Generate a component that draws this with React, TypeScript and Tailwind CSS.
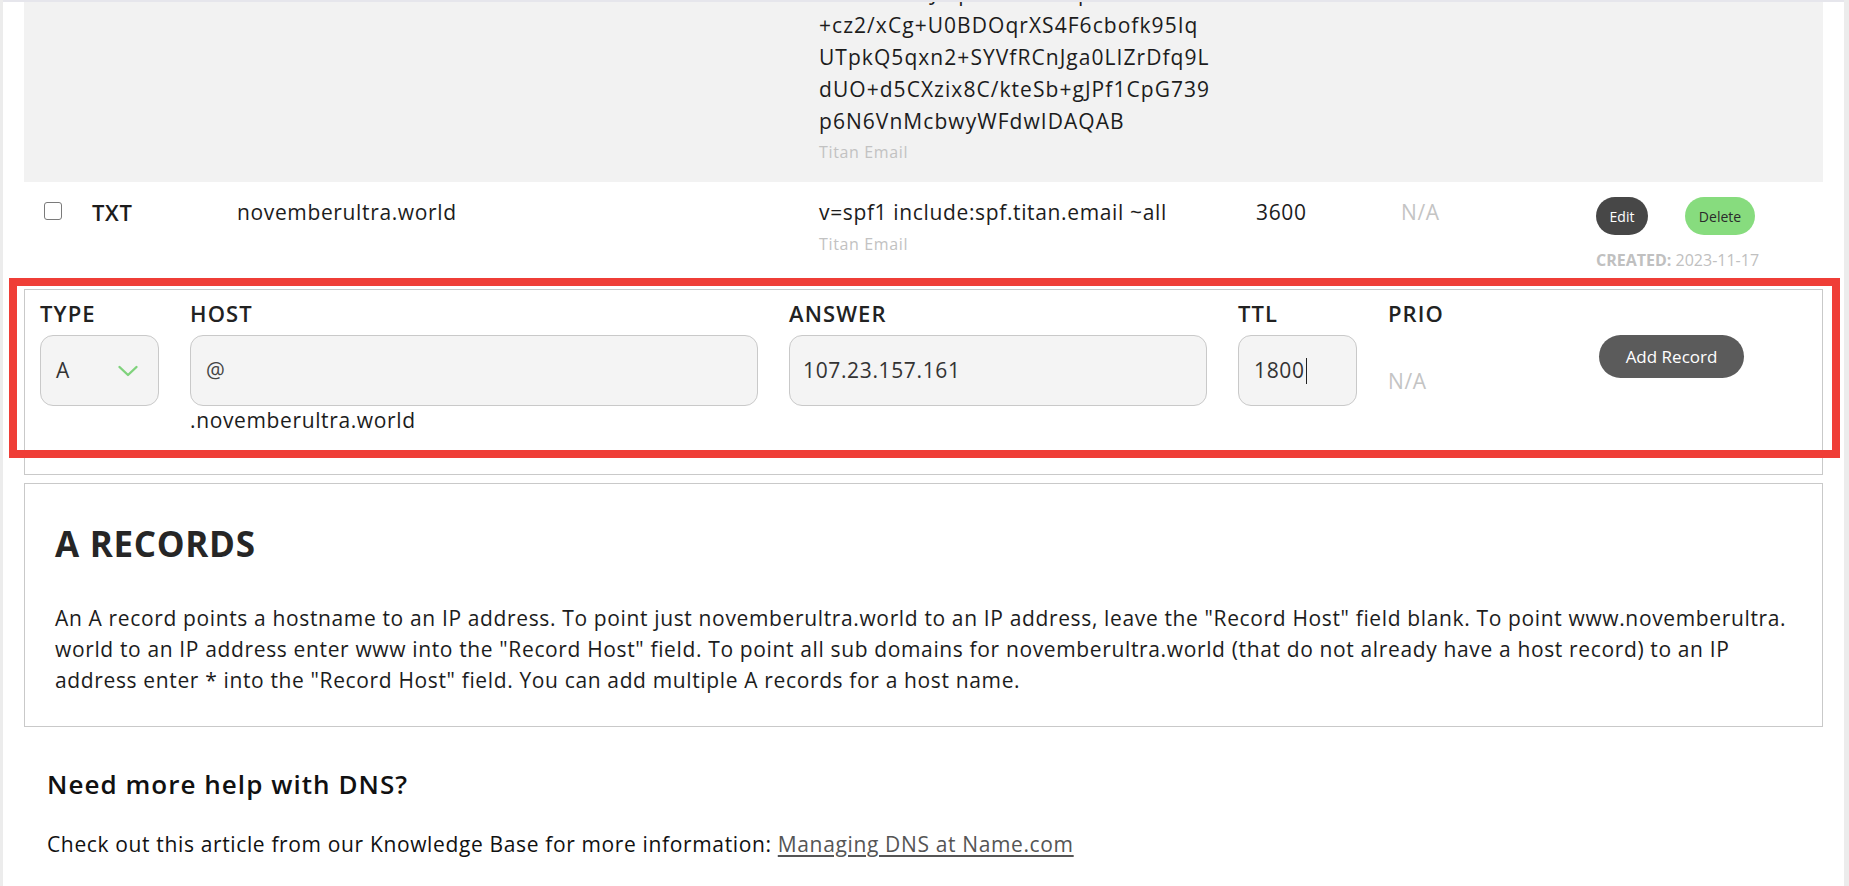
import React from "react";

const keyLines = [
  "hIMh7w6dJ2q0D1VvIchdpIhAnr+YvRr+o",
  "+cz2/xCg+U0BDOqrXS4F6cbofk95Iq",
  "UTpkQ5qxn2+SYVfRCnJga0LIZrDfq9L",
  "dUO+d5CXzix8C/kteSb+gJPf1CpG739",
  "p6N6VnMcbwyWFdwIDAQAB",
];

function Chevron() {
  return (
    <svg width="22" height="14" viewBox="0 0 22 14" fill="none">
      <path d="M2.5 3 L11 11 L19.5 3" stroke="#7fd27c" strokeWidth="2.4" strokeLinecap="round" strokeLinejoin="round" />
    </svg>
  );
}

function Label({ children }: { children: React.ReactNode }) {
  return <div className="text-[22px] leading-[28px] font-semibold tracking-[0.05em] text-[#222] mb-2">{children}</div>;
}

export default function App() {
  return (
    <div className="relative h-[886px] w-full overflow-hidden bg-white font-['Open_Sans','Liberation_Sans',sans-serif] tracking-[0.04em] text-[#1c1c1c]">
      {/* window frame edges */}
      <div className="absolute left-0 top-0 h-[2px] w-full bg-[#e6e6ec]" />
      <div className="absolute left-0 top-0 h-full w-[3px] bg-[#ececec]" />
      <div className="absolute right-0 top-0 h-full w-[5px] bg-[#ececec]" />

      <div className="ml-[24px] w-[1799px]">
        {/* DKIM record row (scrolled) */}
        <div className="h-[182px] overflow-hidden bg-[#f2f2f2]">
          <div className="mt-[-23px] grid grid-cols-[48px_145px_582px_437px_145px_195px_1fr] pl-[20px]">
            <div />
            <div />
            <div />
            <div>
              {keyLines.map((l) => (
                <div key={l} className="text-[21px] leading-[32px] tracking-[0.05em] whitespace-nowrap">{l}</div>
              ))}
              <div className="text-[16px] leading-[24px] text-[#c2c2c2] mt-[3px]">Titan Email</div>
            </div>
          </div>
        </div>

        {/* TXT record row */}
        <div className="h-[107px] grid grid-cols-[48px_145px_582px_437px_145px_195px_1fr] pl-[20px] pt-[16px]">
          <div className="pt-[4px]">
            <div className="h-[18px] w-[18px] rounded-[3px] border-[1.5px] border-[#7a7a7a] bg-white" />
          </div>
          <div className="text-[22px] leading-[28px] font-semibold">TXT</div>
          <div className="text-[21px] leading-[28px]">novemberultra.world</div>
          <div>
            <div className="text-[21px] leading-[28px] whitespace-nowrap">v=spf1 include:spf.titan.email ~all</div>
            <div className="text-[16px] leading-[24px] text-[#c2c2c2] mt-[6px]">Titan Email</div>
          </div>
          <div className="text-[21px] leading-[28px]">3600</div>
          <div className="text-[21px] leading-[28px] text-[#c4c4c4]">N/A</div>
          <div className="flex flex-col">
            <div className="flex items-center gap-[37px] mt-[-1px]">
              <button className="h-[38px] w-[52px] rounded-full bg-[#474747] text-[14px] tracking-normal text-white">Edit</button>
              <button className="h-[38px] w-[70px] rounded-full bg-[#87dc7e] text-[14px] tracking-normal text-[#2b2b2b]">Delete</button>
            </div>
            <div className="mt-[15px] whitespace-nowrap text-[16px] leading-[20px] tracking-normal text-[#c0c0c0]">
              <span className="font-bold">CREATED:</span> 2023-11-17
            </div>
          </div>
        </div>

        {/* New record form */}
        <div className="h-[186px] border border-[#c9c9c9] px-[15px] pt-[9px]">
          <div className="flex gap-[31px]">
            <div className="w-[119px]">
              <Label>TYPE</Label>
              <div className="flex h-[71px] items-center justify-between rounded-[13px] border border-[#c9c9c9] bg-[#f4f4f4] pl-[15px] pr-[19px] text-[21px] text-[#333]">
                <span>A</span>
                <Chevron />
              </div>
            </div>
            <div className="w-[568px]">
              <Label>HOST</Label>
              <div className="flex h-[71px] items-center rounded-[13px] border border-[#c9c9c9] bg-[#f4f4f4] px-[15px] text-[21px] text-[#444]">@</div>
              <div className="text-[21px] leading-[28px] tracking-[0.03em] text-[#1c1c1c]">.novemberultra.world</div>
            </div>
            <div className="w-[418px]">
              <Label>ANSWER</Label>
              <div className="flex h-[71px] items-center rounded-[13px] border border-[#c9c9c9] bg-[#f4f4f4] px-[13px] text-[21px] text-[#333]">107.23.157.161</div>
            </div>
            <div className="w-[119px]">
              <Label>TTL</Label>
              <div className="flex h-[71px] items-center rounded-[13px] border border-[#c9c9c9] bg-[#f4f4f4] px-[15px] text-[21px] text-[#333]">
                1800<span className="ml-[1px] inline-block h-[26px] w-[1.5px] bg-[#222]" />
              </div>
            </div>
            <div className="w-[180px]">
              <Label>PRIO</Label>
              <div className="pt-[32px] text-[21px] leading-[28px] text-[#c4c4c4]">N/A</div>
            </div>
            <div className="pt-[36px]">
              <button className="h-[43px] w-[145px] rounded-full bg-[#5b5b5b] text-[17px] tracking-normal text-white">Add Record</button>
            </div>
          </div>
        </div>

        {/* A records help panel */}
        <div className="mt-[8px] h-[244px] border border-[#c9c9c9] pl-[30px] pt-[40px]">
          <h2 className="text-[35px] leading-[40px] font-bold tracking-[0.02em] text-[#262626]">A RECORDS</h2>
          <p className="mt-[39px] text-[21px] leading-[31px] text-[#1c1c1c]">
            <span className="block whitespace-nowrap">An A record points a hostname to an IP address. To point just novemberultra.world to an IP address, leave the "Record Host" field blank. To point www.novemberultra.</span>
            <span className="block whitespace-nowrap">world to an IP address enter www into the "Record Host" field. To point all sub domains for novemberultra.world (that do not already have a host record) to an IP</span>
            <span className="block whitespace-nowrap">address enter * into the "Record Host" field. You can add multiple A records for a host name.</span>
          </p>
        </div>
      </div>

      {/* Help footer */}
      <div className="ml-[47px] mt-[40px]">
        <h3 className="text-[26px] leading-[34px] font-semibold tracking-[0.04em] text-[#111]">Need more help with DNS?</h3>
        <p className="mt-[28px] text-[21px] leading-[31px] text-[#111]">
          Check out this article from our Knowledge Base for more information:{" "}
          <a className="text-[#555] underline underline-offset-[3px]">Managing DNS at Name.com</a>
        </p>
      </div>

      {/* highlight frame around the form */}
      <div className="pointer-events-none absolute left-[9px] top-[278px] h-[180px] w-[1831px] border-[8px] border-[#ef3e37]" />
    </div>
  );
}
